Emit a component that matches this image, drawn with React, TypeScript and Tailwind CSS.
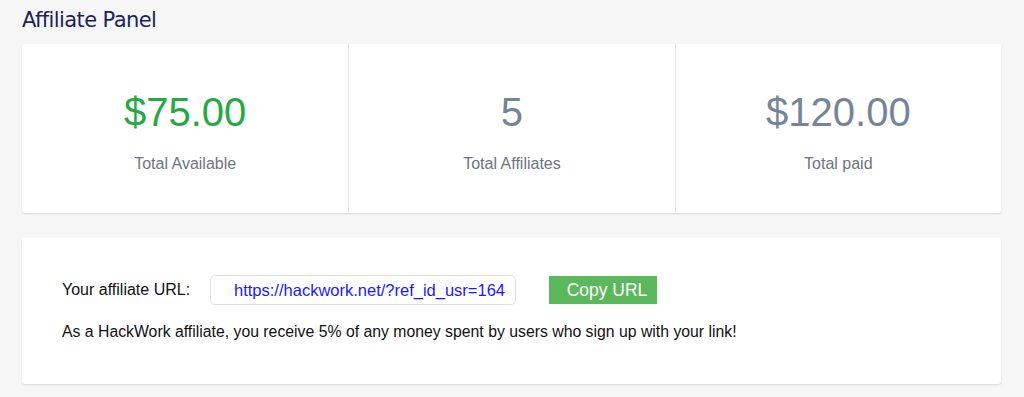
import React from 'react';

const stats = [
  { value: '$75.00', label: 'Total Available', color: 'text-[#28a745]' },
  { value: '5', label: 'Total Affiliates', color: 'text-[#76849a]' },
  { value: '$120.00', label: 'Total paid', color: 'text-[#76849a]' },
];

const App: React.FC = () => {
  return (
    <div className="w-[1024px] h-[397px] bg-[#f6f6f7] overflow-hidden font-['Liberation_Sans',Arial,sans-serif]">
      <div className="pl-[22px] pr-[23px]">
        <h1 className="pt-[6px] h-[44px] text-[21px] leading-[28px] text-[#1c1f5c] font-['DejaVu_Sans',Verdana,sans-serif] tracking-[-0.6px]">
          Affiliate Panel
        </h1>

        <div className="grid grid-cols-3 bg-white rounded-[3px] shadow-[0_1px_2px_rgba(0,0,0,0.12)] h-[169px]">
          {stats.map((s, i) => (
            <div
              key={s.label}
              className={`flex flex-col items-center pt-[44px] ${i > 0 ? 'border-l border-[#e6e8ee]' : ''}`}
            >
              <div className={`text-[40px] leading-[48px] ${s.color}`}>{s.value}</div>
              <div className="mt-[18px] text-[16px] leading-[20px] text-[#6c757d]">{s.label}</div>
            </div>
          ))}
        </div>

        <div className="mt-[25px] bg-white rounded-[3px] shadow-[0_1px_2px_rgba(0,0,0,0.12)] h-[146px] pl-[40px] pt-[37px]">
          <div className="flex items-center">
            <span className="text-[16px] text-[#111] w-[148px]">Your affiliate URL:</span>
            <div className="w-[306px] h-[30px] border border-[#e2dede] rounded-[5px] flex items-center pl-[23px] text-[16.5px] text-[#1a1aff]">
              https://hackwork.net/?ref_id_usr=164
            </div>
            <button className="ml-[33px] w-[108px] h-[28px] pl-[8px] bg-[#5cb85c] text-white text-[17.5px]">
              Copy URL
            </button>
          </div>
          <p className="mt-[15px] text-[15.8px] text-[#111]">
            As a HackWork affiliate, you receive 5% of any money spent by users who sign up with your link!
          </p>
        </div>
      </div>
    </div>
  );
};

export default App;
